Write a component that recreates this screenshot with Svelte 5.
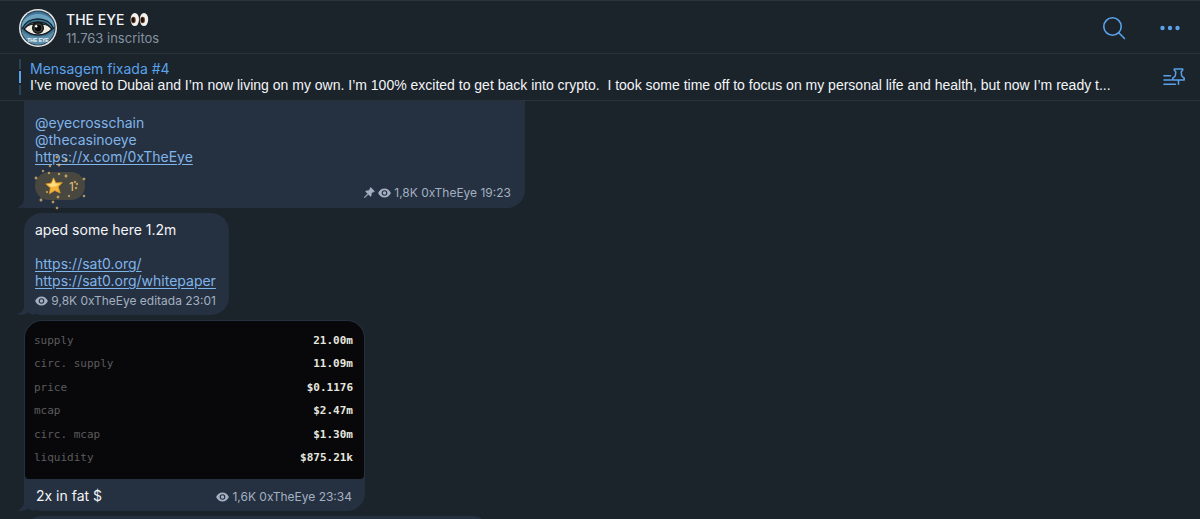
<script>
  const stats = [
    ['supply', '21.00m'],
    ['circ. supply', '11.09m'],
    ['price', '$0.1176'],
    ['mcap', '$2.47m'],
    ['circ. mcap', '$1.30m'],
    ['liquidity', '$875.21k']
  ];

  // Four-pointed sparkles around the star reaction: x, y, radius
  const sparkles = [
    [3, 28, 2.2], [33, 26, 2.4], [51, 29, 2], [51, 46, 1.8], [8, 50, 2.4],
    [20, 52, 2], [24, 58, 1.8], [25, 47, 2], [17, 16, 1.6], [26, 15, 2.2],
    [24, 7, 2.2], [33, 10, 1.8], [10, 21, 1.4], [16, 23, 1.4], [26, 24, 1.4],
    [36, 46, 1.2], [42, 32, 1.4], [43, 38, 1.6], [44, 34, 1.4], [14, 42, 1.2]
  ];
  const spark = ([x, y, r]) =>
    `M${x} ${y - r}L${x + 0.6} ${y - 0.6}L${x + r} ${y}L${x + 0.6} ${y + 0.6}L${x} ${y + r}L${x - 0.6} ${y + 0.6}L${x - r} ${y}L${x - 0.6} ${y - 0.6}Z`;
</script>

{#snippet eye()}
  <svg class="eye" width="13" height="10" viewBox="0 0 13 10" aria-hidden="true">
    <path fill-rule="evenodd" fill="currentColor" d="M6.500.4C3.600.4 1.200 2.300.1 5c1.100 2.700 3.500 4.600 6.400 4.600s5.300-1.900 6.400-4.600C11.800 2.300 9.400.4 6.500.4Zm0 7.400a2.800 2.800 0 1 1 0-5.600 2.800 2.800 0 0 1 0 5.600Z" />
    <circle cx="6.500" cy="5" r="1.700" fill="currentColor" />
  </svg>
{/snippet}

{#snippet tail()}
  <svg class="tail" width="18" height="18" viewBox="0 0 18 18" aria-hidden="true">
    <path fill="currentColor" d="M7 0v9c0 4-3 7-7 8.500 4 1 8 .3 11-2 2 1.700 4 2.500 7 2.500V0Z" />
  </svg>
{/snippet}

<div class="app">
  <header class="top">
    <svg class="avatar" width="38" height="38" viewBox="0 0 38 38" role="img" aria-label="THE EYE">
      <defs><clipPath id="disc"><circle cx="19" cy="19" r="16.500" /></clipPath></defs>
      <circle cx="19" cy="19" r="19" fill="#e6e9e8" />
      <circle cx="19" cy="19" r="17.500" fill="#263b49" />
      <g clip-path="url(#disc)">
        <rect width="38" height="38" fill="#3f7594" />
        <path d="M1 17C6 7 13 5 19 5s13 2 18 12l-4 2C29 12 24 9.500 19 9.500S9 12 5 19Z" fill="#6ba3c0" />
        <path d="M3 20C7 12 12 10 19 10s12 2 16 10" fill="none" stroke="#14242e" stroke-width="1.600" />
        <path d="M5 20C10 14.500 13 13 19 13S28 14.500 33 20c-4 4.500-9 6-14 6S9 24.500 5 20Z" fill="#f1ece2" stroke="#111a20" stroke-width="1.500" />
        <path d="M7 18c3-3 7-4.500 12-4.500S28 15 31 18l-5-2H12Z" fill="#1b242b" />
        <circle cx="19" cy="19" r="5.300" fill="#54493f" stroke="#10161a" stroke-width="1.500" />
        <circle cx="19" cy="19" r="3.400" fill="#080b0e" />
        <circle cx="17.200" cy="17.200" r="1.200" fill="#fff" />
        <path d="M3 22c4 4.500 9 5.500 16 5.500S31 26.500 35 22l1 16H2Z" fill="#5b8da9" />
      </g>
      <text x="19" y="33" text-anchor="middle" class="seal">THE EYE</text>
    </svg>
    <div class="who">
      <h1>THE EYE
        <svg width="19" height="15" viewBox="0 0 19 15" role="img" aria-label="eyes">
          <ellipse cx="4.800" cy="7.500" rx="4.200" ry="6.600" fill="#f4f1ec" />
          <ellipse cx="14" cy="7.500" rx="4.200" ry="6.600" fill="#f4f1ec" />
          <ellipse cx="3.400" cy="8" rx="2.300" ry="3.300" fill="#5f3a25" />
          <ellipse cx="12.600" cy="8" rx="2.300" ry="3.300" fill="#5f3a25" />
          <ellipse cx="3.200" cy="8" rx="1.400" ry="2.200" fill="#150e0b" />
          <ellipse cx="12.400" cy="8" rx="1.400" ry="2.200" fill="#150e0b" />
        </svg>
      </h1>
      <p>11.763 inscritos</p>
    </div>
    <button class="icon search" aria-label="Buscar">
      <svg width="24" height="24" viewBox="0 0 24 24" fill="none" stroke="currentColor" stroke-width="1.600" stroke-linecap="round">
        <circle cx="10.500" cy="10.500" r="8.700" /><path d="m16.800 16.800 5.700 5.700" />
      </svg>
    </button>
    <button class="icon" aria-label="Mais">
      <svg width="20" height="6" viewBox="0 0 20 6" fill="currentColor">
        <circle cx="2.500" cy="3" r="2.200" /><circle cx="10" cy="3" r="2.200" /><circle cx="17.500" cy="3" r="2.200" />
      </svg>
    </button>
  </header>

  <section class="pinned">
    <div class="marks"><i></i><i class="on"></i><i></i></div>
    <div class="pintext">
      <strong>Mensagem fixada #4</strong>
      <p>I’ve moved to Dubai and I’m now living on my own. I’m 100% excited to get back into crypto.&nbsp; I took some time off to focus on my personal life and health, but now I’m ready t...</p>
    </div>
    <button class="icon" aria-label="Mensagens fixadas">
      <svg width="22" height="18" viewBox="0 0 22 18" fill="none" stroke="currentColor" stroke-width="1.500" stroke-linecap="round" stroke-linejoin="round">
        <path d="M1 7.800h6.500M1 12h7.500M1 16.200h11.500" />
        <path d="M11.300 1h8.400v1.300l-1.500 1.500.5 4.200 2.500 2.100v2H9.800v-2L12.300 8l.5-4.200-1.500-1.500Z" />
        <path d="M15.500 12.500v3.700" />
      </svg>
    </button>
  </section>

  <main class="feed">
    <article class="bubble first">
      <p class="body">
        <a class="plain" href="#eyecrosschain">@eyecrosschain</a><br />
        <a class="plain" href="#thecasinoeye">@thecasinoeye</a><br />
        <a href="https://x.com/0xTheEye">https://x.com/0xTheEye</a>
      </p>
      <div class="foot">
        <button class="reaction" aria-label="Estrela, 1">
          <svg class="star" width="18" height="18" viewBox="0 0 18 18" aria-hidden="true">
            <path d="m8.500.8 2.400 5.100 6.300-.3-4 4.400 2 6-5.500-2.400-5.200 3.200.8-6L.8 7l5.600-1Z" fill="#f6b53c" stroke="#e09a2a" stroke-width=".8" stroke-linejoin="round" />
            <path d="m8.500 2 1.800 4.400 4.200.3-3.600 2.600-4.500.6L2.500 7.400l4.400-.8Z" fill="#ffdf7d" />
          </svg>
          <span>1</span>
          <svg class="sparks" width="56" height="62" viewBox="0 0 56 62" aria-hidden="true">
            {#each sparkles as s}<path d={spark(s)} />{/each}
          </svg>
        </button>
        <div class="meta">
          <svg width="11" height="11" viewBox="0 0 11 11" fill="currentColor" aria-hidden="true">
            <path d="M6.700.5 10.500 4.300 9.700 5 9 4.800 7.200 6.600c.3 1.200.1 2-.6 2.800L4.300 7.200 1 10.500l-.6.1.1-.6 3.300-3.300L1.600 4.400c.8-.7 1.600-.9 2.800-.6L6.200 2 6 1.200Z" stroke="currentColor" stroke-width=".6" />
          </svg>
          {@render eye()}<span>1,8K 0xTheEye 19:23</span>
        </div>
      </div>
      {@render tail()}
    </article>

    <article class="bubble second">
      <p class="body">
        aped some here 1.2m<br /><br />
        <a href="https://sat0.org/">https://sat0.org/</a><br />
        <a href="https://sat0.org/whitepaper">https://sat0.org/whitepaper</a>
      </p>
      <div class="meta">{@render eye()}<span>9,8K 0xTheEye editada 23:01</span></div>
      {@render tail()}
    </article>

    <article class="bubble third">
      <table>
        <tbody>
          {#each stats as [name, value]}
            <tr><th scope="row">{name}</th><td>{value}</td></tr>
          {/each}
        </tbody>
      </table>
      <div class="caption">
        <p class="body">2x in fat $</p>
        <div class="meta">{@render eye()}<span>1,6K 0xTheEye 23:34</span></div>
      </div>
      {@render tail()}
    </article>

    <article class="bubble next"></article>
  </main>
</div>

<style>
  :global(body) { margin: 0; background: #1b232b; }
  .app {
    height: 100vh;
    display: flex;
    flex-direction: column;
    overflow: hidden;
    background: #1b232b;
    color: #f3f5f7;
    font-family: Inter, "Liberation Sans", sans-serif;
    font-size: 14px;
    line-height: 17px;
  }
  h1, p { margin: 0; font-size: 14px; font-weight: 400; }
  button { border: 0; padding: 0; background: none; color: inherit; font: inherit; }
  svg { display: block; }
  .top {
    flex: none;
    display: flex;
    align-items: center;
    gap: 9px;
    height: 51px;
    padding: 1px 20px 0 19px;
    border-top: 1px solid #2b343d;
    border-bottom: 1px solid #29323b;
  }
  .who { flex: 1; display: flex; flex-direction: column; gap: 2px; padding-top: 2px; }
  h1 { display: flex; align-items: center; gap: 6px; font-weight: 500; }
  .who p { font-size: 13px; color: #8593a1; }
  .seal { font: 700 5px "Liberation Sans", sans-serif; fill: #f4f6f4; }
  .icon { color: #5aa2ea; }
  .search { margin-right: 25px; }
  .pinned {
    flex: none;
    display: flex;
    align-items: center;
    height: 46px;
    padding: 0 15px 0 19px;
    border-bottom: 1px solid #29323b;
  }
  .marks { display: flex; flex-direction: column; gap: 2px; margin-right: 9px; }
  .marks i { width: 2px; height: 10px; background: #2c4257; }
  .marks .on { height: 12px; background: #5aa2ea; }
  .pintext { flex: 1; min-width: 0; }
  .pintext strong { display: block; font-weight: 400; color: #5aa2ea; }
  .pintext p { white-space: nowrap; font-family: "Liberation Sans", Arial, sans-serif; }
  .feed {
    flex: 1;
    min-height: 0;
    display: flex;
    flex-direction: column;
    align-items: flex-start;
    gap: 5px;
    padding-left: 24px;
    overflow: hidden;
  }
  .bubble {
    position: relative;
    flex: none;
    box-sizing: border-box;
    max-width: calc(100% - 24px);
    border-radius: 18px;
    background: #253040;
  }
  .tail { position: absolute; left: -7px; bottom: 0; color: #253040; z-index: -1; }
  .app, .feed { isolation: isolate; }
  .first { width: 501px; padding: 13px 14px 8px 11px; border-radius: 0 0 18px 0; }
  .second { padding: 8px 13px 7px 11px; }
  .third { width: 341px; padding: 1px 1px 7px; }
  .next { width: 466px; height: 60px; }
  .bubble a { color: #80b5ea; text-underline-offset: 2px; }
  .bubble .plain { text-decoration: none; }
  .meta {
    display: flex;
    align-items: center;
    justify-content: flex-end;
    gap: 3px;
    font-size: 12px;
    line-height: 15px;
    color: #a3b0c1;
  }
  .meta span { white-space: nowrap; }
  .second .meta { margin-top: 4px; }
  .foot { display: flex; justify-content: space-between; align-items: flex-end; margin-top: 7px; }
  .reaction {
    position: relative;
    display: flex;
    align-items: center;
    gap: 6px;
    width: 50px;
    height: 28px;
    padding-left: 10px;
    border-radius: 14px;
    background: #484840;
    color: #e6c07a;
    font-size: 12px;
  }
  .sparks { position: absolute; left: -2px; top: -22px; fill: #e9bf69; }
  table {
    width: 100%;
    height: 158px;
    border-spacing: 0;
    padding: 8px 11px 9px 9px;
    border-radius: 17px 17px 4px 4px;
    background: #08080a;
    font: 11px/14px "DejaVu Sans Mono", "Liberation Mono", monospace;
  }
  th, td { padding: 0; }
  th { text-align: left; font-weight: 400; color: #5b5b5d; }
  td { text-align: right; font-weight: 700; color: #e6e6df; }
  .caption { display: flex; align-items: flex-end; justify-content: space-between; padding: 8px 12px 0 11px; }
</style>
